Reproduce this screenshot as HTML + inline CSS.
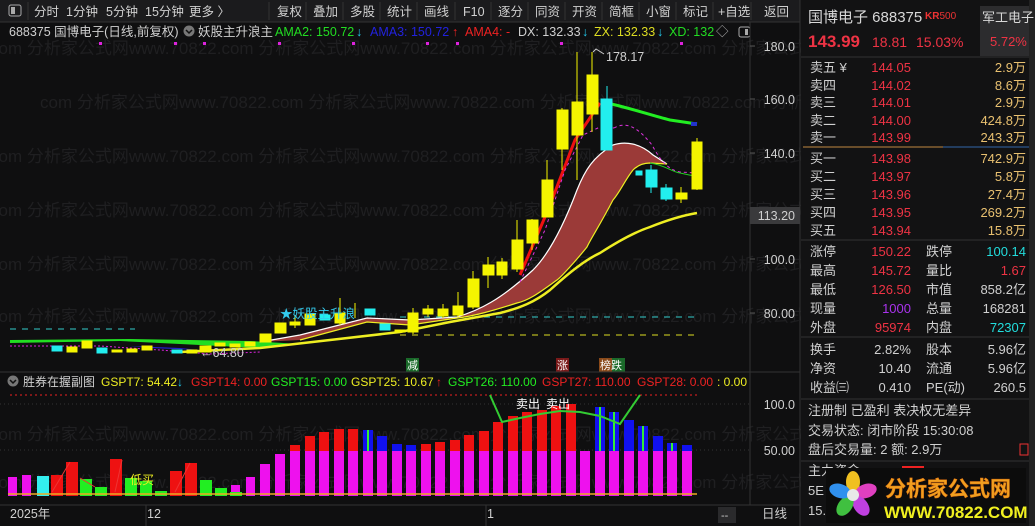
<!DOCTYPE html>
<html><head><meta charset="utf-8"><style>
html,body{margin:0;padding:0;background:#0f0f10;width:1035px;height:526px;overflow:hidden}
svg{display:block;font-family:"Liberation Sans","Noto Sans CJK SC",sans-serif}
</style></head><body>
<svg width="1035" height="526" viewBox="0 0 1035 526" xmlns="http://www.w3.org/2000/svg">
<rect width="1035" height="526" fill="#0f0f10"/>
<rect x="0" y="0" width="800" height="22" fill="#1b1b1d"/>
<line x1="0" y1="22" x2="800" y2="22" stroke="#333"/>
<rect x="9" y="5" width="12" height="11" fill="none" stroke="#aaa" rx="2"/><rect x="11" y="7" width="4" height="7" fill="#aaa"/>
<line x1="28" y1="2" x2="28" y2="20" stroke="#333"/>
<g font-size="12.5" fill="#d0d0d0">
<text x="34" y="16">分时</text><text x="66" y="16">1分钟</text><text x="106" y="16">5分钟</text><text x="145" y="16">15分钟</text><text x="189" y="16">更多 〉</text>
<text x="277" y="16">复权</text><text x="313" y="16">叠加</text><text x="350" y="16">多股</text><text x="387" y="16">统计</text><text x="424" y="16">画线</text><text x="463" y="16">F10</text><text x="498" y="16">逐分</text><text x="535" y="16">同资</text><text x="572" y="16">开资</text><text x="609" y="16">简框</text><text x="646" y="16">小窗</text><text x="683" y="16">标记</text><text x="718" y="16">+自选</text><text x="764" y="16">返回</text>
</g>
<g stroke="#333"><line x1="269" y1="2" x2="269" y2="20"/><line x1="306" y1="2" x2="306" y2="20"/><line x1="343" y1="2" x2="343" y2="20"/><line x1="380" y1="2" x2="380" y2="20"/><line x1="417" y1="2" x2="417" y2="20"/><line x1="455" y1="2" x2="455" y2="20"/><line x1="491" y1="2" x2="491" y2="20"/><line x1="528" y1="2" x2="528" y2="20"/><line x1="565" y1="2" x2="565" y2="20"/><line x1="602" y1="2" x2="602" y2="20"/><line x1="639" y1="2" x2="639" y2="20"/><line x1="676" y1="2" x2="676" y2="20"/><line x1="713" y1="2" x2="713" y2="20"/><line x1="751" y1="2" x2="751" y2="20"/></g>
<g font-size="17" fill="#1f1f21">
<text x="-10" y="54">com 分析家公式网www.70822.com 分析家公式网www.70822.com 分析家公式网www.70822.com 分析家公式网</text>
<text x="40" y="108">com 分析家公式网www.70822.com 分析家公式网www.70822.com 分析家公式网www.70822.com 分析家公式网</text>
<text x="-10" y="162">com 分析家公式网www.70822.com 分析家公式网www.70822.com 分析家公式网www.70822.com 分析家公式网</text>
<text x="-10" y="216">com 分析家公式网www.70822.com 分析家公式网www.70822.com 分析家公式网www.70822.com 分析家公式网</text>
<text x="-10" y="270">com 分析家公式网www.70822.com 分析家公式网www.70822.com 分析家公式网www.70822.com 分析家公式网</text>
<text x="-10" y="322">com 分析家公式网www.70822.com 分析家公式网www.70822.com 分析家公式网www.70822.com 分析家公式网</text>
<text x="-10" y="440">com 分析家公式网www.70822.com 分析家公式网www.70822.com 分析家公式网www.70822.com 分析家公式网</text>
<text x="-10" y="488">com 分析家公式网www.70822.com 分析家公式网www.70822.com 分析家公式网www.70822.com 分析家公式网</text>
</g>
<g font-size="12.5">
<text x="9" y="36" fill="#d0d0d0">688375 国博电子(日线,前复权)</text>
<circle cx="189" cy="31" r="5.5" fill="#777"/><path d="M186 30 l3 3 l3 -3" stroke="#111" stroke-width="1.5" fill="none"/>
<text x="198" y="36" fill="#d0d0d0">妖股主升浪主</text>
<text x="275" y="36" fill="#22dd22">AMA2: 150.72</text><text x="356" y="36" fill="#22ccee">↓</text>
<text x="370" y="36" fill="#2222dd">AMA3: 150.72</text><text x="452" y="36" fill="#ee2222">↑</text>
<text x="465" y="36" fill="#ee2222">AMA4: -</text>
<text x="518" y="36" fill="#d0d0d0">DX: 132.33</text><text x="582" y="36" fill="#22ccee">↓</text>
<text x="594" y="36" fill="#dddd22">ZX: 132.33</text><text x="657" y="36" fill="#22ccee">↓</text>
<text x="669" y="36" fill="#22dd22">XD: 132</text><text x="716" y="36" fill="#aaa">◇</text>
</g>
<rect x="739" y="27" width="11" height="10" fill="none" stroke="#aaa" rx="2"/><rect x="745" y="29" width="3" height="6" fill="#aaa"/>
<g fill="#dd22dd"><rect x="99" y="42" width="3" height="3"/><rect x="174" y="42" width="3" height="3"/><rect x="203" y="42" width="3" height="3"/><rect x="278" y="42" width="3" height="3"/><rect x="352" y="42" width="3" height="3"/><rect x="426" y="42" width="3" height="3"/><rect x="456" y="42" width="3" height="3"/><rect x="560" y="42" width="3" height="3"/><rect x="680" y="42" width="3" height="3"/></g>
<line x1="750" y1="22" x2="750" y2="505" stroke="#333"/>
<line x1="800" y1="0" x2="800" y2="526" stroke="#333"/>
<g font-size="12.5" fill="#d0d0d0" text-anchor="end">
<text x="795" y="51">180.0</text><text x="795" y="104">160.0</text><text x="795" y="158">140.0</text><text x="795" y="264">100.0</text><text x="795" y="318">80.00</text>
</g>
<g stroke="#555"><line x1="750" y1="46" x2="755" y2="46"/><line x1="750" y1="99" x2="755" y2="99"/><line x1="750" y1="153" x2="755" y2="153"/><line x1="750" y1="259" x2="755" y2="259"/><line x1="750" y1="313" x2="755" y2="313"/></g>
<rect x="750" y="207" width="50" height="17" fill="#3a3a3c"/><text x="795" y="220" font-size="12.5" fill="#d0d0d0" text-anchor="end">113.20</text>
<line x1="10" y1="329" x2="135" y2="329" stroke="#33cccc" stroke-dasharray="6 6"/>
<line x1="400" y1="317" x2="700" y2="317" stroke="#33cccc" stroke-dasharray="6 6"/>
<line x1="400" y1="335" x2="700" y2="335" stroke="#dddd22" stroke-dasharray="6 6"/>
<path d="M10 343 L120 341 L200 345 L260 348 L300 344 L250 341 L130 339 L10 340Z" fill="#22dd22"/>
<path d="M130 346 L180 348 L200 350 L150 348Z" fill="#2222cc"/>
<path d="M10 346 L100 346 L160 350 L210 354 L260 352" stroke="#dd22dd" fill="none" stroke-dasharray="2 2"/>
<path d="M260 342 L300 335 L367 318 L410 320 L457 317 C480 310 500 300 533 270 C545 258 560 235 577 190 C585 170 593 157 613 145 C625 141 640 143 653 155 L667 164 L650 163 C640 163 635 168 633 170 C625 180 620 192 613 200 C600 225 590 240 587 247 C575 262 560 278 557 280 C540 292 530 300 517 303 C495 310 475 316 457 318 L410 325 L367 322 L300 340Z" fill="#9b3a38"/>
<path d="M260 342 L300 335 L367 318 L410 320 L457 317 C480 310 500 300 533 270 C545 258 560 235 577 190 C585 170 593 157 613 145 C625 141 640 143 653 155 L667 164" stroke="#fff" fill="none" stroke-width="1.2"/>
<path d="M300 340 L367 322 L410 325 L457 318 C475 316 495 310 517 303 C530 300 540 292 557 280 C560 278 575 262 587 247 C590 240 600 225 613 200 C620 192 625 180 633 170 C635 168 640 163 650 163 L667 164" stroke="#eeee22" fill="none" stroke-width="1.2"/>
<path d="M180 352 L260 348 L330 340 L400 332 L450 322 L500 313 C520 308 535 302 550 290 C570 272 585 260 600 253 C620 240 635 232 650 227 C670 219 685 215 697 213" stroke="#eeee22" stroke-width="2.5" fill="none"/>
<path d="M520 275 L548 210 L575 140 L600 103" stroke="#ee1111" stroke-width="3" fill="none"/>
<path d="M520 282 L545 230 L565 170 L583 135 L600 127 L614 128" stroke="#dd33dd" stroke-width="1" stroke-dasharray="3 3" fill="none"/>
<path d="M614 128 C628 120 640 130 652 145 C660 160 668 170 680 172 L697 173" stroke="#dd33dd" stroke-width="1" stroke-dasharray="3 3" fill="none"/>
<path d="M607 103 C630 108 650 115 670 120 L697 124" stroke="#22ee22" stroke-width="3" fill="none"/>
<rect x="691" y="122" width="6" height="4" fill="#2233cc"/>
<path d="M650 163 C665 165 672 172 680 173 L694 176" stroke="#22cc22" stroke-width="1" fill="none"/>
<g fill="#f5f500" stroke="#f5f500">
<line x1="413" y1="308" x2="413" y2="334"/><rect x="408" y="313" width="10" height="19"/>
<line x1="428" y1="305" x2="428" y2="317"/><rect x="423" y="309" width="10" height="5"/>
<line x1="443" y1="304" x2="443" y2="318"/><rect x="438" y="309" width="10" height="7"/>
<line x1="458" y1="292" x2="458" y2="317"/><rect x="453" y="306" width="10" height="9"/>
<line x1="473" y1="271" x2="473" y2="309"/><rect x="468" y="279" width="11" height="28"/>
<line x1="488" y1="257" x2="488" y2="288"/><rect x="483" y="265" width="11" height="10"/>
<line x1="502" y1="258" x2="502" y2="279"/><rect x="497" y="262" width="10" height="13"/>
<line x1="517" y1="220" x2="517" y2="272"/><rect x="512" y="240" width="11" height="29"/>
<line x1="532" y1="219" x2="532" y2="250"/><rect x="527" y="220" width="11" height="23"/>
<line x1="547" y1="160" x2="547" y2="217"/><rect x="542" y="180" width="11" height="37"/>
<line x1="562" y1="108" x2="562" y2="170"/><rect x="557" y="110" width="11" height="39"/>
<line x1="577" y1="52" x2="577" y2="180"/><rect x="572" y="102" width="11" height="33"/>
<line x1="592" y1="52" x2="592" y2="132"/><rect x="587" y="75" width="11" height="39"/>
<line x1="681" y1="187" x2="681" y2="203"/><rect x="676" y="193" width="11" height="6"/>
<line x1="697" y1="138" x2="697" y2="190"/><rect x="692" y="142" width="10" height="47"/>
<rect x="67" y="347" width="10" height="5"/><rect x="82" y="341" width="10" height="7"/>
<rect x="112" y="350" width="10" height="2"/><rect x="127" y="349" width="10" height="3"/><rect x="142" y="346" width="10" height="4"/>
<rect x="187" y="350" width="10" height="3"/><rect x="200" y="346" width="11" height="6"/><rect x="215" y="343" width="10" height="3"/><rect x="230" y="344" width="10" height="3"/><rect x="245" y="342" width="10" height="4"/>
<rect x="260" y="334" width="11" height="8"/><rect x="275" y="323" width="11" height="10"/><rect x="290" y="322" width="10" height="3"/><rect x="305" y="314" width="10" height="11"/><rect x="335" y="313" width="10" height="10"/><rect x="395" y="330" width="10" height="2"/>
<line x1="340" y1="298" x2="340" y2="325"/><line x1="295" y1="315" x2="295" y2="328"/><line x1="355" y1="303" x2="355" y2="318"/>
</g>
<g fill="#22eeee" stroke="#22eeee">
<line x1="607" y1="86" x2="607" y2="150"/><rect x="601" y="99" width="11" height="51"/>
<rect x="636" y="171" width="6" height="4"/>
<line x1="651" y1="165" x2="651" y2="193"/><rect x="646" y="170" width="11" height="17"/>
<line x1="666" y1="184" x2="666" y2="201"/><rect x="661" y="188" width="11" height="11"/>
<rect x="52" y="346" width="10" height="5"/><rect x="97" y="348" width="10" height="5"/><rect x="172" y="350" width="10" height="3"/><rect x="320" y="315" width="10" height="5"/><rect x="365" y="309" width="10" height="6"/><rect x="380" y="324" width="10" height="6"/>
</g>
<text x="606" y="61" font-size="12.5" fill="#d0d0d0">178.17</text>
<path d="M593 52 l3 -3 l8 5" stroke="#ccc" fill="none"/>
<text x="200" y="357" font-size="12.5" fill="#d0d0d0">←64.80</text>
<text x="280" y="318" font-size="12.5" fill="#33ccee">★妖股主升浪</text>
<rect x="406" y="358" width="13" height="14" fill="#1a6a2a"/><text x="407" y="369" font-size="11" fill="#fff">减</text>
<rect x="556" y="358" width="13" height="14" fill="#7a1a1a"/><text x="557" y="369" font-size="11" fill="#fff">涨</text>
<rect x="599" y="358" width="13" height="14" fill="#8a4a1a"/><rect x="612" y="358" width="13" height="14" fill="#1a6a2a"/><text x="600" y="369" font-size="11" fill="#fff">榜跌</text>
<line x1="0" y1="372" x2="800" y2="372" stroke="#333"/>
<circle cx="13" cy="381" r="5.5" fill="#777"/><path d="M10 380 l3 3 l3 -3" stroke="#111" stroke-width="1.5" fill="none"/>
<g font-size="12">
<text x="23" y="386" fill="#d0d0d0">胜券在握副图</text>
<text x="101" y="386" fill="#eeee22">GSPT7: 54.42</text><text x="177" y="386" fill="#22ccee">↓</text>
<text x="191" y="386" fill="#ee2222">GSPT14: 0.00</text>
<text x="271" y="386" fill="#22ee22">GSPT15: 0.00</text>
<text x="351" y="386" fill="#eeee22">GSPT25: 10.67</text><text x="436" y="386" fill="#ee2222">↑</text>
<text x="448" y="386" fill="#22ee22">GSPT26: 110.00</text>
<text x="542" y="386" fill="#ee2222">GSPT27: 110.00</text>
<text x="637" y="386" fill="#ee2222">GSPT28: 0.00</text><text x="717" y="386" fill="#eeee22">: 0.00</text>
</g>
<line x1="10" y1="395" x2="697" y2="395" stroke="#ee2222" stroke-dasharray="2 3"/>
<line x1="0" y1="404" x2="750" y2="404" stroke="#333" stroke-dasharray="1 3"/>
<line x1="0" y1="450" x2="750" y2="450" stroke="#333" stroke-dasharray="1 3"/>
<g font-size="12.5" fill="#d0d0d0" text-anchor="end"><text x="795" y="409">100.0</text><text x="795" y="455">50.00</text></g>
<g fill="#ee11ee">
<rect x="8" y="477" width="9" height="19"/><rect x="22" y="475" width="9" height="21"/>
<rect x="231" y="485" width="9" height="11"/><rect x="246" y="477" width="9" height="19"/>
<rect x="260" y="464" width="10" height="32"/><rect x="275" y="454" width="10" height="42"/>
<rect x="290" y="451" width="10" height="45"/><rect x="305" y="451" width="10" height="45"/><rect x="319" y="451" width="10" height="45"/><rect x="334" y="451" width="10" height="45"/><rect x="348" y="451" width="10" height="45"/><rect x="363" y="451" width="10" height="45"/><rect x="377" y="451" width="10" height="45"/><rect x="392" y="451" width="10" height="45"/><rect x="406" y="451" width="10" height="45"/><rect x="421" y="451" width="10" height="45"/><rect x="435" y="451" width="10" height="45"/><rect x="450" y="451" width="10" height="45"/><rect x="464" y="451" width="10" height="45"/><rect x="479" y="451" width="10" height="45"/><rect x="493" y="451" width="10" height="45"/><rect x="508" y="451" width="10" height="45"/><rect x="522" y="451" width="10" height="45"/><rect x="537" y="451" width="10" height="45"/><rect x="551" y="451" width="10" height="45"/><rect x="566" y="451" width="10" height="45"/><rect x="580" y="451" width="10" height="45"/><rect x="595" y="451" width="10" height="45"/><rect x="609" y="451" width="10" height="45"/><rect x="624" y="451" width="10" height="45"/><rect x="638" y="451" width="10" height="45"/><rect x="653" y="451" width="10" height="45"/><rect x="667" y="451" width="10" height="45"/><rect x="682" y="451" width="10" height="45"/>
</g>
<g fill="#ee1111">
<rect x="51" y="475" width="12" height="21"/><rect x="66" y="462" width="12" height="34"/><rect x="110" y="459" width="12" height="37"/><rect x="170" y="471" width="12" height="25"/><rect x="185" y="463" width="12" height="33"/>
<rect x="290" y="445" width="10" height="6"/><rect x="305" y="436" width="10" height="15"/><rect x="319" y="432" width="10" height="19"/><rect x="334" y="429" width="10" height="22"/><rect x="348" y="429" width="10" height="22"/>
<rect x="421" y="444" width="10" height="7"/><rect x="435" y="442" width="10" height="9"/><rect x="450" y="440" width="10" height="11"/><rect x="464" y="435" width="10" height="16"/><rect x="479" y="431" width="10" height="20"/><rect x="493" y="422" width="10" height="29"/><rect x="508" y="416" width="10" height="35"/><rect x="522" y="412" width="10" height="39"/><rect x="537" y="410" width="10" height="41"/><rect x="551" y="406" width="10" height="45"/><rect x="566" y="404" width="10" height="47"/>
</g>
<rect x="37" y="476" width="12" height="20" fill="#33eeee"/>
<g fill="#22ee22">
<rect x="80" y="479" width="12" height="17"/><rect x="95" y="487" width="12" height="9"/><rect x="125" y="478" width="12" height="18"/><rect x="140" y="481" width="12" height="15"/><rect x="155" y="491" width="12" height="5"/><rect x="200" y="480" width="12" height="16"/><rect x="215" y="488" width="12" height="8"/><rect x="230" y="492" width="12" height="4"/>
</g>
<g fill="#1111ee">
<rect x="363" y="430" width="10" height="21"/><rect x="377" y="436" width="10" height="15"/><rect x="392" y="444" width="10" height="7"/><rect x="406" y="445" width="10" height="6"/>
<rect x="595" y="407" width="10" height="44"/><rect x="609" y="412" width="10" height="39"/><rect x="624" y="420" width="10" height="31"/><rect x="638" y="426" width="10" height="25"/><rect x="653" y="436" width="10" height="15"/><rect x="667" y="443" width="10" height="8"/><rect x="682" y="445" width="10" height="6"/>
</g>
<g stroke="#33ee33" stroke-width="2"><line x1="368" y1="430" x2="368" y2="451"/><line x1="600" y1="407" x2="600" y2="451"/><line x1="614" y1="412" x2="614" y2="451"/><line x1="643" y1="426" x2="643" y2="451"/><line x1="672" y1="443" x2="672" y2="451"/></g>
<path d="M490 395 L502 422 L520 418 L540 414 L560 411 L580 412 L600 416 L620 424 L640 395" stroke="#33cc33" stroke-width="2" fill="none"/>
<path d="M52 492 L70 462 M115 492 L122 460 M175 492 L190 463 M80 478 L95 487" stroke="#ee3333" fill="none"/>
<line x1="8" y1="494" x2="697" y2="494" stroke="#eeaa22" stroke-width="1.5"/>
<text x="130" y="484" font-size="12" fill="#eeee22">低买</text>
<text x="516" y="408" font-size="12" fill="#fff">卖出</text><text x="546" y="408" font-size="12" fill="#fff">卖出</text>
<line x1="0" y1="505" x2="800" y2="505" stroke="#333"/>
<g font-size="12.5" fill="#d0d0d0"><text x="10" y="518">2025年</text><text x="147" y="518">12</text><text x="487" y="518">1</text><text x="762" y="518">日线</text></g>
<rect x="718" y="507" width="18" height="16" fill="#2a2a2c"/><text x="721" y="519" font-size="11" fill="#ccc">--</text>
<line x1="146" y1="505" x2="146" y2="526" stroke="#333"/><line x1="486" y1="505" x2="486" y2="526" stroke="#333"/>
<rect x="801" y="0" width="234" height="526" fill="#121213"/>
<rect x="1029" y="0" width="6" height="526" fill="#222"/>
<text x="808" y="22" font-size="15" fill="#d8d8d8">国博电子 688375</text>
<text x="925" y="19" font-size="10" fill="#ee3333" font-weight="bold">KR<tspan font-weight="normal">500</tspan></text>
<rect x="980" y="6" width="49" height="50" fill="#2c2c2e"/>
<text x="982" y="22" font-size="13" fill="#d8d8d8">军工电子</text>
<text x="990" y="46" font-size="13" fill="#ee3344">5.72%</text>
<text x="808" y="47" font-size="17" fill="#ee3344" font-weight="bold">143.99</text>
<text x="872" y="47" font-size="14" fill="#ee3344">18.81</text><text x="916" y="47" font-size="14" fill="#ee3344">15.03%</text>
<line x1="801" y1="57" x2="1029" y2="57" stroke="#333"/>
<g font-size="13">
<g fill="#d0d0d0"><text x="810" y="72">卖五 ¥</text><text x="810" y="90">卖四</text><text x="810" y="107">卖三</text><text x="810" y="125">卖二</text><text x="810" y="142">卖一</text>
<text x="810" y="163">买一</text><text x="810" y="181">买二</text><text x="810" y="199">买三</text><text x="810" y="217">买四</text><text x="810" y="235">买五</text>
<text x="810" y="256">涨停</text><text x="810" y="275">最高</text><text x="810" y="294">最低</text><text x="810" y="313">现量</text><text x="810" y="332">外盘</text>
<text x="926" y="256">跌停</text><text x="926" y="275">量比</text><text x="926" y="294">市值</text><text x="926" y="313">总量</text><text x="926" y="332">内盘</text>
<text x="810" y="354">换手</text><text x="810" y="373">净资</text><text x="810" y="392">收益㈢</text>
<text x="926" y="354">股本</text><text x="926" y="373">流通</text><text x="926" y="392">PE(动)</text>
<text x="808" y="415">注册制 已盈利 表决权无差异</text><text x="808" y="435">交易状态: 闭市阶段 15:30:08</text><text x="808" y="454">盘后交易量: 2  额: 2.9万</text>
<text x="808" y="475">主力资金</text><text x="808" y="495">5E</text><text x="808" y="515">15.0</text>
</g>
<g fill="#ee3344" text-anchor="end"><text x="911" y="72">144.05</text><text x="911" y="90">144.02</text><text x="911" y="107">144.01</text><text x="911" y="125">144.00</text><text x="911" y="142">143.99</text>
<text x="911" y="163">143.98</text><text x="911" y="181">143.97</text><text x="911" y="199">143.96</text><text x="911" y="217">143.95</text><text x="911" y="235">143.94</text>
<text x="911" y="256">150.22</text><text x="911" y="275">145.72</text><text x="1026" y="275">1.67</text><text x="911" y="332">95974</text><text x="911" y="294">126.50</text></g>
<g fill="#e8c070" text-anchor="end"><text x="1026" y="72">2.9万</text><text x="1026" y="90">8.6万</text><text x="1026" y="107">2.9万</text><text x="1026" y="125">424.8万</text><text x="1026" y="142">243.3万</text>
<text x="1026" y="163">742.9万</text><text x="1026" y="181">5.8万</text><text x="1026" y="199">27.4万</text><text x="1026" y="217">269.2万</text><text x="1026" y="235">15.8万</text></g>
<g fill="#22dddd" text-anchor="end"><text x="1026" y="256">100.14</text><text x="1026" y="332">72307</text></g>
<g fill="#d0d0d0" text-anchor="end"><text x="1026" y="294">858.2亿</text><text x="1026" y="313">168281</text><text x="911" y="354">2.82%</text><text x="911" y="373">10.40</text><text x="911" y="392">0.410</text><text x="1026" y="354">5.96亿</text><text x="1026" y="373">5.96亿</text><text x="1026" y="392">260.5</text></g>
<text x="911" y="313" fill="#aa33ee" text-anchor="end">1000</text>
</g>
<line x1="803" y1="147" x2="943" y2="147" stroke="#c08840"/><line x1="943" y1="147" x2="1029" y2="147" stroke="#3366aa"/>
<g stroke="#333"><line x1="801" y1="240" x2="1029" y2="240"/><line x1="801" y1="337" x2="1029" y2="337"/><line x1="801" y1="399" x2="1029" y2="399"/><line x1="801" y1="461" x2="1029" y2="461"/></g>
<rect x="1020" y="444" width="8" height="11" fill="none" stroke="#ee3333"/>
<rect x="902" y="466" width="22" height="3" fill="#ee2222"/>
<rect x="826" y="468" width="200" height="55" fill="#0c0c0c"/>
<g transform="translate(853,495)">
<ellipse cx="0" cy="-13" rx="7" ry="11" fill="#f0c020"/>
<ellipse cx="13" cy="-4" rx="7" ry="11" fill="#e040c0" transform="rotate(72 13 -4)"/>
<ellipse cx="8" cy="11" rx="7" ry="11" fill="#c040e0" transform="rotate(144 8 11)"/>
<ellipse cx="-8" cy="11" rx="7" ry="11" fill="#40c040" transform="rotate(216 -8 11)"/>
<ellipse cx="-13" cy="-4" rx="7" ry="11" fill="#3090ee" transform="rotate(288 -13 -4)"/>
<circle r="6" fill="#e8e8e8"/>
</g>
<text x="885" y="496" font-size="21" font-weight="bold" fill="#f0a020" stroke="#e07010" stroke-width="0.5">分析家公式网</text>
<text x="884" y="518" font-size="17" font-weight="bold" fill="#f0f020">WWW.70822.COM</text>
</svg>
</body></html>
